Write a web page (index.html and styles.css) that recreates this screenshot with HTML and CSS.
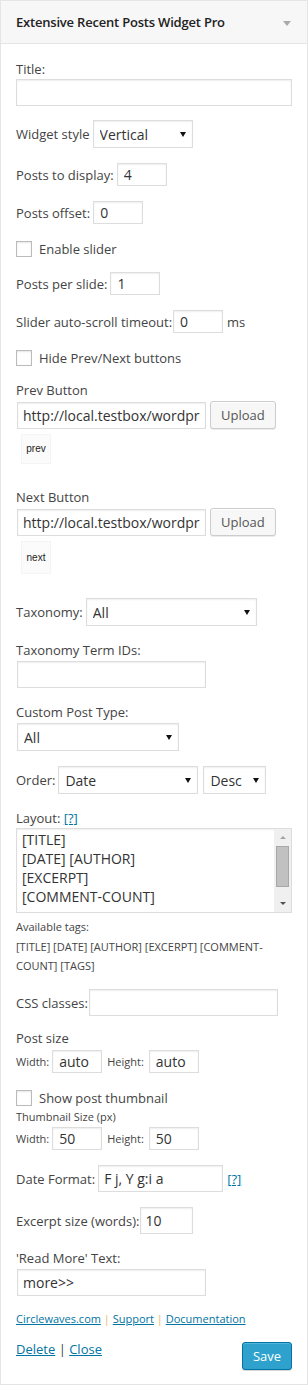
FILE: index.html
```html
<!DOCTYPE html>
<html lang="en">
<head>
<meta charset="utf-8">
<title>Extensive Recent Posts Widget Pro</title>
<link rel="stylesheet" href="styles.css">
</head>
<body>
<div class="widget">
  <div class="widget-top">
    <h4 class="widget-title">Extensive Recent Posts Widget Pro</h4>
    <span class="toggle"></span>
  </div>
  <div class="widget-inside">
    <label class="lbl m-first">Title:</label>
    <input class="txt full m-1" type="text" value="">

    <div class="row m-14">
      <label>Widget style</label>
      <span class="sel"><select class="w-style"><option>Vertical</option></select></span>
    </div>

    <div class="row">
      <label>Posts to display:</label>
      <input class="txt sm" type="text" value="4">
    </div>

    <div class="row">
      <label>Posts offset:</label>
      <input class="txt sm" type="text" value="0">
    </div>

    <div class="row chk m-17">
      <input class="cb" type="checkbox">
      <label>Enable slider</label>
    </div>

    <div class="row">
      <label>Posts per slide:</label>
      <input class="txt sm" type="text" value="1">
    </div>

    <div class="row g-1">
      <label>Slider auto-scroll timeout:</label>
      <input class="txt sm" type="text" value="0">
      <span class="unit">ms</span>
    </div>

    <div class="row chk m-17">
      <input class="cb" type="checkbox">
      <label>Hide Prev/Next buttons</label>
    </div>

    <label class="lbl">Prev Button</label>
    <div class="row m-2">
      <input class="txt url" type="text" value="http://local.testbox/wordpress/wp-content/uploads/prev.png">
      <button class="button">Upload</button>
    </div>
    <div class="thumb m-5">prev</div>

    <label class="lbl m-24">Next Button</label>
    <div class="row m-2">
      <input class="txt url" type="text" value="http://local.testbox/wordpress/wp-content/uploads/next.png">
      <button class="button">Upload</button>
    </div>
    <div class="thumb tall m-5">next</div>

    <div class="row m-24">
      <label>Taxonomy:</label>
      <span class="sel"><select class="w-tax"><option>All</option></select></span>
    </div>

    <label class="lbl">Taxonomy Term IDs:</label>
    <input class="txt url m-2" type="text" value="">

    <label class="lbl">Custom Post Type:</label>
    <span class="sel blk m-2"><select class="w-cpt"><option>All</option></select></span>

    <div class="row">
      <label>Order:</label>
      <span class="sel"><select class="w-date"><option>Date</option></select></span>
      <span class="sel gap5"><select class="w-desc"><option>Desc</option></select></span>
    </div>

    <label class="lbl">Layout: <a href="#" class="help">[?]</a></label>
    <div class="tawrap m-1">
      <textarea class="ta" rows="4">[TITLE]
[DATE] [AUTHOR]
[EXCERPT]
[COMMENT-COUNT]</textarea>
      <div class="sb">
        <div class="sb-btn"><span class="arr up"></span></div>
        <div class="sb-thumb"></div>
        <div class="sb-track"></div>
        <div class="sb-btn"><span class="arr down"></span></div>
      </div>
    </div>
    <div class="small tags">Available tags:<br>[TITLE] [DATE] [AUTHOR] [EXCERPT] [COMMENT-COUNT] [TAGS]</div>

    <div class="row g-1 m-13h">
      <label>CSS classes:</label>
      <input class="txt w-css" type="text" value="">
    </div>

    <label class="lbl m-13">Post size</label>
    <div class="row m-3">
      <label class="small">Width:</label>
      <input class="txt sm" type="text" value="auto">
      <label class="small hl">Height:</label>
      <input class="txt sm hi" type="text" value="auto">
    </div>

    <div class="row chk m-17">
      <input class="cb" type="checkbox">
      <label>Show post thumbnail</label>
    </div>
    <div class="small m-1">Thumbnail Size (px)</div>
    <div class="row m-h">
      <label class="small">Width:</label>
      <input class="txt sm" type="text" value="50">
      <label class="small hl">Height:</label>
      <input class="txt sm hi" type="text" value="50">
    </div>

    <div class="row">
      <label>Date Format:</label>
      <input class="txt w-date-f" type="text" value="F j, Y g:i a">
      <a href="#" class="help hm">[?]</a>
    </div>

    <div class="row g-0">
      <label>Excerpt size (words):</label>
      <input class="txt w-exc" type="text" value="10">
    </div>

    <label class="lbl">'Read More' Text:</label>
    <input class="txt url m-2" type="text" value="more&gt;&gt;">

    <div class="links m-14"><a href="#">Circlewaves.com</a> <span class="sep">|</span> <a href="#">Support</a> <span class="sep">|</span> <a href="#">Documentation</a></div>

    <div class="actions m-12">
      <div class="ctl"><a href="#">Delete</a> | <a href="#">Close</a></div>
      <button class="button button-primary">Save</button>
    </div>
  </div>
</div>
</body>
</html>
```

FILE: styles.css
```css
* { box-sizing: border-box; }

html, body {
  margin: 0;
  padding: 0;
  background: #fff;
}

body {
  width: 308px;
  font-family: "Open Sans", "Liberation Sans", sans-serif;
  font-size: 13px;
  line-height: 18px;
  color: #444;
}

a { color: #0074a2; text-decoration: underline; }

.widget {
  width: 308px;
  height: 1385px;
  border: 1px solid #e5e5e5;
  background: #fff;
}

.widget-top {
  height: 43px;
  background: #f7f7f7;
  border-bottom: 1px solid #e5e5e5;
  display: flex;
  align-items: center;
  justify-content: space-between;
  padding: 0 16px 0 15px;
}

.widget-title {
  margin: 0;
  font-size: 13px;
  font-weight: 600;
  line-height: 18px;
  letter-spacing: -0.2px;
  color: #222;
}

.toggle {
  width: 0;
  height: 0;
  border-left: 4px solid transparent;
  border-right: 4px solid transparent;
  border-top: 5px solid #aaa;
  margin-top: 3px;
}

.widget-inside {
  padding: 1px 15px 0;
}

.lbl { display: block; margin-top: 15px; }

.row {
  display: flex;
  align-items: center;
  gap: 3px;
  margin-top: 15px;
}
.g-1 { gap: 1px; }
.g-0 { gap: 0; }

.chk { gap: 7px; height: 16px; }

/* spacing modifiers */
.m-first { margin-top: 15px; }
.m-h { margin-top: 0.5px; }
.m-1 { margin-top: 1px; }
.m-2 { margin-top: 2px; }
.m-3 { margin-top: 3px; }
.m-5 { margin-top: 5px; }
.m-12 { margin-top: 12px; }
.m-13 { margin-top: 13px; }
.m-13h { margin-top: 13.5px; }
.m-14 { margin-top: 14px; }
.m-17 { margin-top: 17px; }
.m-24 { margin-top: 24px; }

/* text inputs */
.txt {
  display: block;
  margin-bottom: 0;
  height: 27px;
  padding: 0 5px;
  border: 1px solid #ddd;
  border-radius: 0;
  background: #fff;
  box-shadow: inset 0 1px 2px rgba(0,0,0,.07);
  font-family: "Open Sans", "Liberation Sans", sans-serif;
  font-size: 14px;
  color: #333;
  outline: none;
}

.full { width: 276px; }
.url { width: 189px; margin-left: 1px; }
.sm { width: 50px; height: 23px; padding: 0 6px; }
.hl { margin-left: 2px; }
.hi { margin-left: 2px; }
.w-css { width: 189px; }
.w-date-f { width: 125px; }
.w-exc { width: 53px; }

.unit { margin-left: 3px; }

/* selects */
.sel {
  position: relative;
  display: inline-block;
}
.sel.blk { display: block; margin-left: 1px; width: 162px; }
.sel::after {
  content: "";
  position: absolute;
  right: 7px;
  top: 50%;
  margin-top: -2px;
  border-left: 3px solid transparent;
  border-right: 3px solid transparent;
  border-top: 5px solid #111;
}
.sel select {
  -webkit-appearance: none;
  appearance: none;
  display: block;
  height: 28px;
  margin: 0;
  padding: 0 6px;
  border: 1px solid #ddd;
  border-radius: 0;
  background: #fff;
  box-shadow: inset 0 1px 2px rgba(0,0,0,.07);
  font-family: "Open Sans", "Liberation Sans", sans-serif;
  font-size: 14px;
  color: #333;
  outline: none;
}
.w-style { width: 100px; }
.w-tax { width: 171px; }
.w-cpt { width: 162px; }
.w-date { width: 140px; }
.w-desc { width: 63px; }
.gap5 { margin-left: 2px; }

/* checkbox */
.cb {
  -webkit-appearance: none;
  appearance: none;
  width: 16px;
  height: 16px;
  margin: 0;
  border: 1px solid #bbb;
  background: #fff;
  box-shadow: inset 0 1px 2px rgba(0,0,0,.1);
  flex: none;
}

/* buttons */
.button {
  height: 28px;
  margin: 0 0 0 1px;
  padding: 0 10px;
  border: 1px solid #ccc;
  border-radius: 3px;
  background: #f7f7f7;
  box-shadow: inset 0 1px 0 #fff, 0 1px 0 rgba(0,0,0,.08);
  font-family: "Open Sans", "Liberation Sans", sans-serif;
  font-size: 13px;
  line-height: 26px;
  color: #555;
}

.button-primary {
  width: 50px;
  margin: 2px 0 0;
  padding: 0;
  background: #2ea2cc;
  border-color: #0074a2;
  box-shadow: inset 0 1px 0 rgba(120,200,230,.5), 0 1px 0 rgba(0,0,0,.15);
  color: #fff;
}

/* preview images */
.thumb {
  width: 30px;
  height: 30px;
  margin-left: 5px;
  display: flex;
  align-items: center;
  justify-content: center;
  background: #fbfbfb;
  border: 1px solid #f4f4f4;
  font-family: "Liberation Sans", Arial, sans-serif;
  font-size: 10px;
  color: #222;
}
.thumb.tall { height: 33px; }

/* textarea with scrollbar */
.tawrap {
  display: flex;
  width: 276px;
  height: 85px;
  border: 1px solid #ddd;
  box-shadow: inset 0 1px 2px rgba(0,0,0,.07);
  background: #fff;
}
.ta {
  flex: 1;
  min-width: 0;
  height: 100%;
  margin: 0;
  padding: 1px 5px;
  border: 0;
  background: transparent;
  resize: none;
  overflow: hidden;
  font-family: "Open Sans", "Liberation Sans", sans-serif;
  font-size: 14px;
  line-height: 19px;
  color: #333;
  outline: none;
}
.sb {
  width: 17px;
  display: flex;
  flex-direction: column;
  background: #f0f0f0;
}
.sb-btn {
  height: 17px;
  display: flex;
  align-items: center;
  justify-content: center;
}
.arr {
  width: 0;
  height: 0;
  border-left: 3px solid transparent;
  border-right: 3px solid transparent;
}
.arr.up { border-bottom: 3px solid #a3a3a3; }
.arr.down { border-top: 3px solid #505050; }
.sb-thumb {
  width: 13px;
  height: 41px;
  margin-left: 2px;
  background: #c1c1c1;
  border: 1px solid #a8a8a8;
}
.sb-track { flex: 1; }

.small {
  font-size: 11px;
  line-height: 19.5px;
}
.tags { margin-top: 4px; }

.help { font-size: 13px; }
.hm { margin-left: 1px; }

.links {
  font-size: 11px;
  line-height: 18px;
}
.sep { color: #e8b66e; }

.actions {
  display: flex;
  justify-content: space-between;
  align-items: flex-start;
}
```
